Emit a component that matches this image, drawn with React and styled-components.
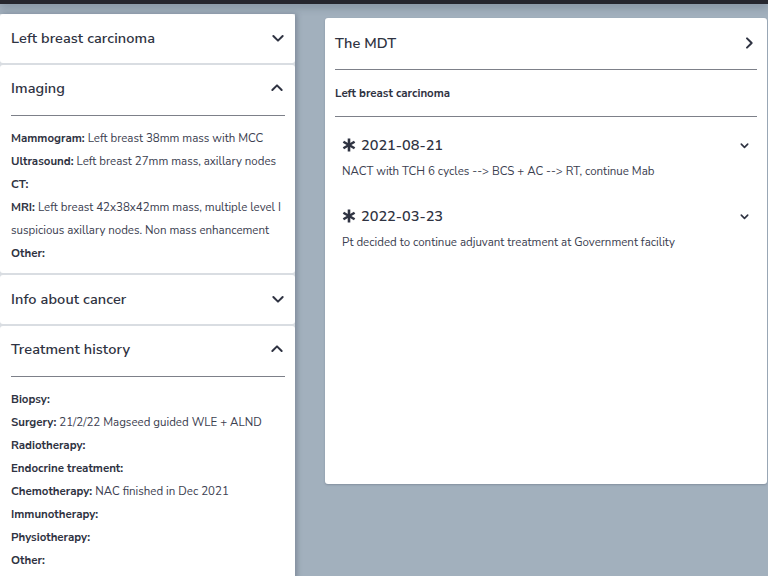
import React from "react";
import styled, { createGlobalStyle } from "styled-components";

const Global = createGlobalStyle`
  html, body { margin: 0; padding: 0; }
  body {
    background: #a2b0bd;
    font-family: "Nunito Sans", Lato, "Noto Sans", sans-serif;
    color: #2f3342;
    overflow: hidden;
  }
`;

const Page = styled.div`
  width: 768px;
  height: 576px;
  overflow: hidden;
  display: flex;
  flex-direction: column;
  background: #a2b0bd;
`;

const TopBar = styled.div`
  height: 4px;
  flex: none;
  background: #26262e;
  box-shadow: 0 2px 8px rgba(40, 50, 70, 0.45);
  position: relative;
  z-index: 2;
`;

const Main = styled.div`
  display: flex;
  align-items: flex-start;
  gap: 30px;
  padding-top: 10px;
`;

const LeftColumn = styled.div`
  width: 295px;
  flex: none;
  display: flex;
  flex-direction: column;
  gap: 2px;
  box-shadow: 2px 0 5px rgba(60, 70, 90, 0.35);
  background: #d9dde2;
`;

const Card = styled.section`
  background: #fff;
  border-radius: 3px;
`;

const CardHeader = styled.div`
  box-sizing: border-box;
  height: ${(p) => (p.$open ? 51 : 49)}px;
  display: flex;
  align-items: center;
  justify-content: space-between;
  border-bottom: ${(p) => (p.$open ? "1px solid #7d8089" : "none")};
  margin: 0 ${(p) => (p.$open ? 10 : 0)}px 0 ${(p) => (p.$open ? 11 : 0)}px;
  padding: 0 ${(p) => (p.$open ? 0 : 9)}px ${(p) => (p.$open ? 4 : 1)}px ${(p) => (p.$open ? 0 : 11)}px;
`;

const CardTitle = styled.h2`
  margin: 0;
  font-size: 14.5px;
  font-weight: 600;
  color: #2f3342;
  letter-spacing: 0.1px;
`;

const Chevron = styled.svg`
  flex: none;
  color: #2f3342;
`;

const CardBody = styled.div`
  padding: 11px 11px 8px;
`;

const Line = styled.div`
  font-size: 11.5px;
  line-height: 23px;
  color: #3b4050;
  white-space: nowrap;
`;

const Label = styled.b`
  font-weight: 700;
  color: #2f3342;
`;

const RightPanel = styled.section`
  flex: 1;
  margin-top: 4px;
  margin-right: 1px;
  height: 466px;
  box-sizing: border-box;
  background: #fff;
  border-radius: 3px;
  padding: 0 10px;
  box-shadow: 0 1px 2px rgba(60, 70, 90, 0.3);
`;

const PanelHeader = styled.div`
  box-sizing: border-box;
  height: 52px;
  padding-bottom: 2px;
  display: flex;
  align-items: center;
  justify-content: space-between;
  border-bottom: 1px solid #7d8089;
`;

const SubHeader = styled.div`
  height: 46px;
  display: flex;
  align-items: center;
  font-size: 11.5px;
  font-weight: 700;
  color: #2f3342;
  border-bottom: 1px solid #7d8089;
`;

const Item = styled.div`
  padding: 16px 7px 5px 7px;
`;

const ItemHead = styled.div`
  height: 24px;
  display: flex;
  align-items: center;
  justify-content: space-between;
`;

const ItemDate = styled.div`
  display: flex;
  align-items: center;
  gap: 5px;
  font-size: 14.5px;
  font-weight: 600;
  color: #2f3342;
`;

const ItemText = styled.div`
  margin-top: 2px;
  font-size: 11.5px;
  line-height: 24px;
  color: #3b4050;
`;

const Icon = ({ d, size = 16, sw = 3 }) => (
  <Chevron viewBox="0 0 24 24" width={size} height={size}>
    <path d={d} fill="none" stroke="currentColor" strokeWidth={sw} strokeLinecap="round" strokeLinejoin="round" />
  </Chevron>
);
const DOWN = "M5 9l7 7 7-7";
const UP = "M5 15l7-7 7 7";
const RIGHT = "M9 5l7 7-7 7";

const Asterisk = () => (
  <svg width="14" height="14" viewBox="0 0 14 14">
    <g stroke="#2f3342" strokeWidth="2.6" strokeLinecap="butt">
      <line x1="7" y1="0.5" x2="7" y2="13.5" />
      <line x1="1.4" y1="3.75" x2="12.6" y2="10.25" />
      <line x1="1.4" y1="10.25" x2="12.6" y2="3.75" />
    </g>
  </svg>
);

const imaging = [
  ["Mammogram:", "Left breast 38mm mass with MCC"],
  ["Ultrasound:", "Left breast 27mm mass, axillary nodes"],
  ["CT:", ""],
  ["MRI:", "Left breast 42x38x42mm mass, multiple level I"],
  [null, "suspicious axillary nodes. Non mass enhancement"],
  ["Other:", ""],
];

const treatment = [
  ["Biopsy:", ""],
  ["Surgery:", "21/2/22 Magseed guided WLE + ALND"],
  ["Radiotherapy:", ""],
  ["Endocrine treatment:", ""],
  ["Chemotherapy:", "NAC finished in Dec 2021"],
  ["Immunotherapy:", ""],
  ["Physiotherapy:", ""],
  ["Other:", ""],
];

const mdt = [
  ["2021-08-21", "NACT with TCH 6 cycles --> BCS + AC --> RT, continue Mab"],
  ["2022-03-23", "Pt decided to continue adjuvant treatment at Government facility"],
];

const Rows = ({ rows }) =>
  rows.map(([l, t], i) => (
    <Line key={i}>
      {l && <Label>{l}</Label>}
      {l && t ? " " : ""}
      {t}
    </Line>
  ));

export default function App() {
  return (
    <Page>
      <Global />
      <TopBar />
      <Main>
        <LeftColumn>
          <Card>
            <CardHeader>
              <CardTitle>Left breast carcinoma</CardTitle>
              <Icon d={DOWN} />
            </CardHeader>
          </Card>
          <Card>
            <CardHeader $open>
              <CardTitle>Imaging</CardTitle>
              <Icon d={UP} />
            </CardHeader>
            <CardBody>
              <Rows rows={imaging} />
            </CardBody>
          </Card>
          <Card>
            <CardHeader>
              <CardTitle>Info about cancer</CardTitle>
              <Icon d={DOWN} />
            </CardHeader>
          </Card>
          <Card>
            <CardHeader $open>
              <CardTitle>Treatment history</CardTitle>
              <Icon d={UP} />
            </CardHeader>
            <CardBody>
              <Rows rows={treatment} />
            </CardBody>
          </Card>
        </LeftColumn>
        <RightPanel>
          <PanelHeader>
            <CardTitle>The MDT</CardTitle>
            <Icon d={RIGHT} />
          </PanelHeader>
          <SubHeader>Left breast carcinoma</SubHeader>
          {mdt.map(([d, t]) => (
            <Item key={d}>
              <ItemHead>
                <ItemDate>
                  <Asterisk />
                  {d}
                </ItemDate>
                <Icon d={DOWN} size={11} sw={3.5} />
              </ItemHead>
              <ItemText>{t}</ItemText>
            </Item>
          ))}
        </RightPanel>
      </Main>
    </Page>
  );
}
